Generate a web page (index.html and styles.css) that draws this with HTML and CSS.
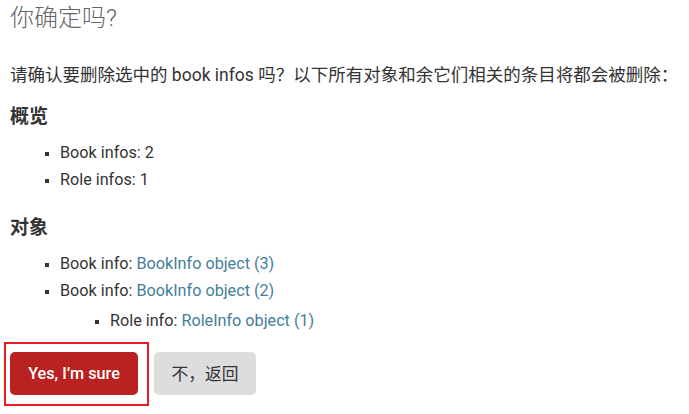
FILE: index.html
```html
<!DOCTYPE html>
<html lang="zh-CN">
<head>
  <meta charset="UTF-8">
  <title>你确定吗？</title>
  <meta name="viewport" content="width=device-width, initial-scale=1">
  <link rel="stylesheet" href="styles.css">
</head>
<body>
  <div id="content">
    <h1>你确定吗?</h1>
    <p>请确认要删除选中的 book infos 吗？以下所有对象和余它们相关的条目将都会被删除：</p>

    <h2>概览</h2>
    <ul>
      <li>Book infos: 2</li>
      <li>Role infos: 1</li>
    </ul>

    <h2>对象</h2>
    <ul>
      <li>Book info: <a href="#">BookInfo object (3)</a></li>
      <li>Book info: <a href="#">BookInfo object (2)</a>
        <ul>
          <li>Role info: <a href="#">RoleInfo object (1)</a></li>
        </ul>
      </li>
    </ul>

    <form class="actions">
      <button type="submit" class="confirm">Yes, I’m sure</button>
      <a href="#" class="button cancel-link">不，返回</a>
    </form>
  </div>
</body>
</html>
```

FILE: styles.css
```css
body {
  margin: 0;
  padding: 0 10px;
  font-family: Roboto, "Noto Sans CJK SC", sans-serif;
  font-size: 16.2px;
  color: #333;
  background: #fff;
}
h1 {
  margin: 0;
  font-size: 24px;
  line-height: 36px;
  font-weight: 300;
  color: #666;
}
p {
  margin: 27px 0 0;
  font-size: 17.5px;
  line-height: 24px;
}
h2 {
  margin: 18px 0 0;
  font-size: 19px;
  line-height: 24px;
  font-weight: 700;
}
ul + h2 { margin-top: 23px; }
ul {
  margin: 11px 0 0;
  padding-left: 50px;
}
ul li {
  list-style-type: square;
  line-height: 26.5px;
}
ul li::marker { font-size: 14px; }
ul ul {
  margin-top: 4px;
  padding-left: 50px;
}
a {
  color: #447e9b;
  text-decoration: none;
}
.actions {
  display: flex;
  gap: 16px;
  margin-top: 17px;
  padding-bottom: 14px;
}
.actions .confirm,
.actions .button {
  display: flex;
  align-items: center;
  justify-content: center;
  height: 43px;
  box-sizing: border-box;
  border: none;
  border-radius: 5px;
  font-family: Roboto, "Noto Sans CJK SC", sans-serif;
  font-size: 16.2px;
}
.confirm {
  position: relative;
  width: 128px;
  background: #ba2121;
  color: #fff;
  font-weight: 500;
}
/* focus ring */
.confirm::after {
  content: "";
  position: absolute;
  inset: -10px -11px -11px -6px;
  border: 2px solid #e81c24;
}
.cancel-link {
  width: 102px;
  background: #ddd;
  color: #333;
  font-size: 16.8px !important;
}
```
